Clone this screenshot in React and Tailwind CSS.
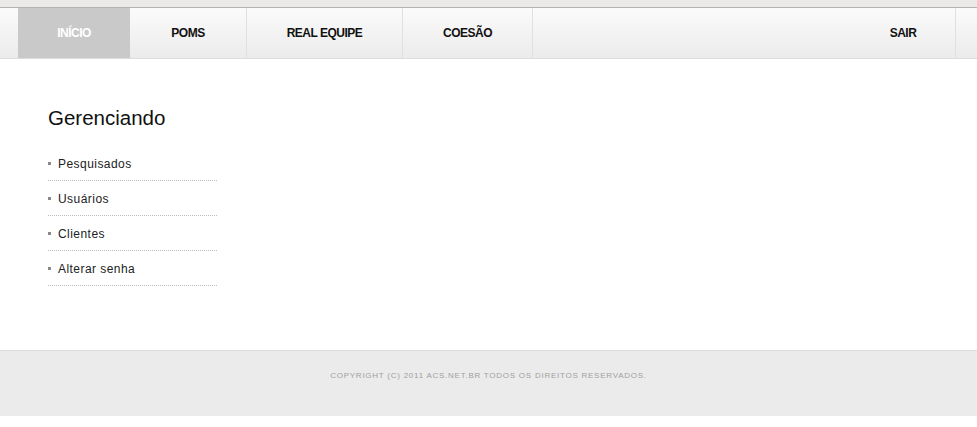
export default function App() {
    const menu = [
        { name: 'INÍCIO', w: 'w-[112px]', active: true },
        { name: 'POMS', w: 'w-[117px]' },
        { name: 'REAL EQUIPE', w: 'w-[156px]' },
        { name: 'COESÃO', w: 'w-[130px]' },
    ];

    const links = ['Pesquisados', 'Usuários', 'Clientes', 'Alterar senha'];

    return (
        <div className="w-full bg-white font-['Liberation_Sans',Arial,sans-serif] text-[#222]">
            {/* top strip */}
            <div className="h-[8px] bg-[#ebeae8] border-b border-[#b4b4b4]" />

            {/* nav */}
            <nav className="flex h-[51px] pl-[18px] bg-gradient-to-b from-[#fbfbfb] to-[#ebebeb] border-b border-[#dcdcdc]">
                {menu.map((item) => (
                    <a
                        key={item.name}
                        href="#"
                        className={`${item.w} flex items-center justify-center text-[12px] font-bold tracking-[-0.5px] ${item.active
                            ? 'bg-[#c9c9c9] text-white'
                            : 'text-[#111] border-r border-[#e0e0e0]'
                            }`}
                    >
                        {item.name}
                    </a>
                ))}
                <div className="flex-1" />
                <a
                    href="#"
                    className="w-[105px] flex items-center justify-center text-[12px] font-bold tracking-[-0.5px] text-[#111] border-r border-[#e0e0e0]"
                >
                    SAIR
                </a>
                <div className="w-[21px]" />
            </nav>

            {/* content */}
            <main className="pl-[48px] pt-[46px] pb-[64px]">
                <h2 className="mt-[1px] text-[20.5px] leading-[24px] text-[#111]">Gerenciando</h2>
                <ul className="mt-[16px] w-[169px]">
                    {links.map((l) => (
                        <li
                            key={l}
                            className="h-[35px] flex items-center gap-[7px] pt-[1px] border-b border-dotted border-[#bcbcbc] text-[12px] tracking-[0.45px]"
                        >
                            <span className="w-[3px] h-[3px] bg-[#888]" />
                            <a href="#" className="text-[#222]">{l}</a>
                        </li>
                    ))}
                </ul>
            </main>

            {/* footer */}
            <footer className="h-[66px] bg-[#ebebeb] border-t border-[#dcdcdc] pt-[19px] text-center text-[8px] leading-[12px] tracking-[0.75px] text-[#a0a0a0]">
                COPYRIGHT (C) 2011 ACS.NET.BR TODOS OS DIREITOS RESERVADOS.
            </footer>
        </div>
    );
}
